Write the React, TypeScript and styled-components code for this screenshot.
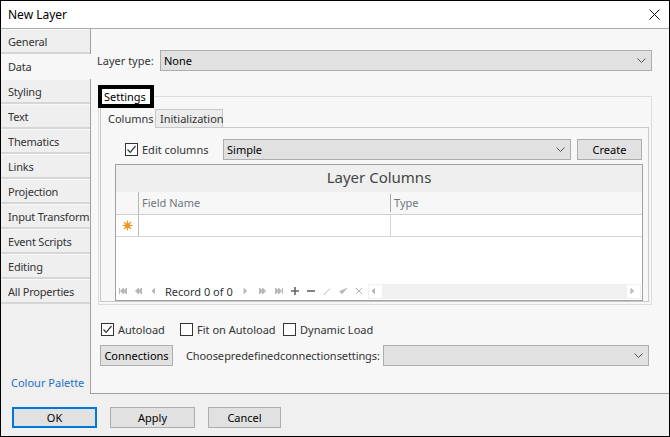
import * as React from 'react'
import styled, { createGlobalStyle } from 'styled-components'

const font = `"Noto Sans", "Segoe UI", "Liberation Sans", sans-serif`

const GlobalStyle = createGlobalStyle`
  html, body { margin: 0; padding: 0; background: #fff; }
  * { box-sizing: border-box; }
`

const navItems = [
  'General',
  'Data',
  'Styling',
  'Text',
  'Thematics',
  'Links',
  'Projection',
  'Input Transform',
  'Event Scripts',
  'Editing',
  'All Properties',
]

const Chevron = () => (
  <svg width="9" height="5" viewBox="0 0 9 5">
    <path d="M0.5 0.5 L4.5 4.5 L8.5 0.5" fill="none" stroke="#555" strokeWidth="1" />
  </svg>
)

const CloseIcon = () => (
  <svg width="11" height="11" viewBox="0 0 11 11">
    <path d="M0.5 0.5 L10.5 10.5 M10.5 0.5 L0.5 10.5" stroke="#111" strokeWidth="1" />
  </svg>
)

const CheckMark = () => (
  <svg width="11" height="11" viewBox="0 0 11 11">
    <path d="M1.5 5.5 L4.2 8.3 L9.5 2" fill="none" stroke="#333" strokeWidth="1.2" />
  </svg>
)

const Star = () => (
  <svg width="11" height="11" viewBox="0 0 11 11">
    <g stroke="#f7941d" strokeWidth="1.1">
      <line x1="5.5" y1="0.5" x2="5.5" y2="10.5" />
      <line x1="0.5" y1="5.5" x2="10.5" y2="5.5" />
      <line x1="2" y1="2" x2="9" y2="9" />
      <line x1="9" y1="2" x2="2" y2="9" />
    </g>
    <circle cx="5.5" cy="5.5" r="2.6" fill="#f7941d" />
  </svg>
)

type NavKind = 'first' | 'prevPage' | 'prev' | 'next' | 'nextPage' | 'last' | 'plus' | 'minus' | 'edit' | 'check' | 'cancel'

const navPaths: Record<NavKind, string> = {
  first: 'M0.5 1 V7 M4.5 1 L1.5 4 L4.5 7Z M7.5 1 L4.5 4 L7.5 7Z',
  prevPage: 'M3.5 1 L0.5 4 L3.5 7Z M6.5 1 L3.5 4 L6.5 7Z',
  prev: 'M3.5 1.5 L1 4 L3.5 6.5Z',
  next: 'M1 1.5 L3.5 4 L1 6.5Z',
  nextPage: 'M0.5 1 L3.5 4 L0.5 7Z M3.5 1 L6.5 4 L3.5 7Z',
  last: 'M0.5 1 L3.5 4 L0.5 7Z M3.5 1 L6.5 4 L3.5 7Z M7.5 1 V7',
  plus: 'M0 4 H8 M4 0 V8',
  minus: 'M0 4 H8',
  edit: 'M1 7.5 L7 1.5 M0.8 7.8 L1.8 7.6',
  check: 'M0.5 4 L3 6.8 L7.8 1',
  cancel: 'M1 1 L7 7 M7 1 L1 7',
}

const NavIcon = ({ kind, dark }: { kind: NavKind; dark?: boolean }) => (
  <svg width="8" height="8" viewBox="0 0 8 8">
    <path
      d={navPaths[kind]}
      fill={dark ? '#666' : '#b7b7b7'}
      stroke={dark ? '#666' : '#b7b7b7'}
      strokeWidth={kind === 'plus' || kind === 'minus' ? 1.6 : 1}
      strokeLinejoin="round"
    />
  </svg>
)

const CheckBox = ({ checked, label, width }: { checked?: boolean; label: string; width?: number }) => (
  <CheckItem width={width}>
    <Box>{checked && <CheckMark />}</Box>
    <span>{label}</span>
  </CheckItem>
)

const Combo = ({ value, grow }: { value?: string; grow?: boolean }) => (
  <ComboBox grow={grow}>
    <span>{value}</span>
    <Chevron />
  </ComboBox>
)

export default function App() {
  return (
    <>
      <GlobalStyle />
      <Window>
        <TitleBar>
          <span>New Layer</span>
          <CloseIcon />
        </TitleBar>
        <Body>
          <Nav>
            {navItems.map((item) => (
              <NavItem key={item} selected={item === 'Data'}>
                {item}
              </NavItem>
            ))}
            <PaletteLink>Colour Palette</PaletteLink>
          </Nav>
          <Content>
            <Row>
              <Label>Layer type:</Label>
              <Combo value="None" grow />
            </Row>
            <Group>
              <Legend>Settings</Legend>
              <TabStrip>
                <Tab selected width={55}>Columns</Tab>
                <Tab width={68}>Initialization</Tab>
                <TabFiller />
              </TabStrip>
              <TabPage>
                <EditRow>
                  <CheckBox checked label="Edit columns" width={92} />
                  <Combo value="Simple" grow />
                  <Button width={65}>Create</Button>
                </EditRow>
                <Grid>
                  <GroupPanel>Layer Columns</GroupPanel>
                  <HeaderRow>
                    <Indicator />
                    <HeaderCell width={251}>Field Name</HeaderCell>
                    <HeaderCell divider>Type</HeaderCell>
                  </HeaderRow>
                  <NewRow>
                    <Indicator>
                      <Star />
                    </Indicator>
                    <Cell width={251} />
                    <Cell divider />
                  </NewRow>
                  <EmptyArea />
                  <Navigator>
                    <NavIcon kind="first" />
                    <NavIcon kind="prevPage" />
                    <NavIcon kind="prev" />
                    <RecordText>Record 0 of 0</RecordText>
                    <NavIcon kind="next" />
                    <NavIcon kind="nextPage" />
                    <NavIcon kind="last" />
                    <NavIcon kind="plus" dark />
                    <NavIcon kind="minus" dark />
                    <NavIcon kind="edit" />
                    <NavIcon kind="check" />
                    <NavIcon kind="cancel" />
                    <ScrollBar>
                      <ScrollButton>
                        <NavIcon kind="prev" />
                      </ScrollButton>
                      <ScrollButton>
                        <NavIcon kind="next" />
                      </ScrollButton>
                    </ScrollBar>
                  </Navigator>
                </Grid>
              </TabPage>
            </Group>
            <OptionsRow>
              <CheckBox checked label="Autoload" width={79} />
              <CheckBox label="Fit on Autoload" width={103} />
              <CheckBox label="Dynamic Load" />
            </OptionsRow>
            <ConnectionsRow>
              <Button width={73}>Connections</Button>
              <ChooseText>Choose predefined connection settings:</ChooseText>
              <Combo grow />
            </ConnectionsRow>
          </Content>
        </Body>
        <Footer>
          <Button width={85} primary>
            OK
          </Button>
          <Button width={85}>Apply</Button>
          <Button width={73}>Cancel</Button>
        </Footer>
      </Window>
    </>
  )
}

const Window = styled.div`
  width: 670px;
  height: 437px;
  border: 1px solid #000;
  display: flex;
  flex-direction: column;
  font-family: ${font};
  font-size: 11px;
  color: #1e1e1e;
  background: #f0f0f0;
  overflow: hidden;
`
const TitleBar = styled.div`
  height: 28px;
  flex: none;
  background: #fff;
  border-bottom: 1px solid #ababab;
  display: flex;
  align-items: center;
  justify-content: space-between;
  padding: 0 9px 1px 7px;
  font-size: 12px;
  color: #000;
`
const Body = styled.div`
  height: 365px;
  flex: none;
  display: flex;
`
const Nav = styled.div`
  width: 90px;
  flex: none;
  display: flex;
  flex-direction: column;
  border-right: 1px solid #a0a0a0;
  background: #f0f0f0;
`
const NavItem = styled.div<{ selected?: boolean }>`
  height: 25px;
  flex: none;
  display: flex;
  align-items: center;
  padding-left: 7px;
  white-space: nowrap;
  letter-spacing: -0.2px;
  color: #333;
  background: ${(p) => (p.selected ? '#f7f7f7' : '#efefef')};
  border-top: 1px solid ${(p) => (p.selected ? '#f7f7f7' : '#f9f9f9')};
  border-bottom: 2px solid ${(p) => (p.selected ? '#f7f7f7' : '#d6d6d6')};
  margin-right: ${(p) => (p.selected ? '-1px' : '0')};
`
const PaletteLink = styled.div`
  margin-top: auto;
  padding: 0 0 4px 10px;
  color: #1f6fc6;
`
const Content = styled.div`
  flex: 1;
  display: flex;
  flex-direction: column;
  background: #f7f7f7;
  border-bottom: 1px solid #a0a0a0;
  padding: 21px 17px 0 6px;
`
const Row = styled.div`
  display: flex;
  align-items: center;
  gap: 4px;
`
const Label = styled.span`
  width: 59px;
  flex: none;
  color: #333;
`
const ComboBox = styled.div<{ grow?: boolean }>`
  height: 21px;
  flex: ${(p) => (p.grow ? 1 : 'none')};
  display: flex;
  align-items: center;
  justify-content: space-between;
  padding: 0 5px 0 3px;
  background: #e1e1e1;
  border: 1px solid #adadad;
  color: #000;
`
const Group = styled.fieldset`
  margin: 14px 0 0 1px;
  border: 1px solid #dcdcdc;
  padding: 0 2px 2px 1px;
  min-width: 0;
`
const Legend = styled.legend`
  margin-left: -2px;
  padding: 0 4px 0 2px;
  border: 4px solid #000;
  background: #fff;
  line-height: 15px;
  color: #000;
`
const TabStrip = styled.div`
  display: flex;
  align-items: flex-end;
  height: 20px;
`
const Tab = styled.div<{ selected?: boolean; width: number }>`
  width: ${(p) => p.width}px;
  height: ${(p) => (p.selected ? 20 : 19)}px;
  display: flex;
  align-items: center;
  padding-left: ${(p) => (p.selected ? 7 : 4)}px;
  color: #333;
  background: ${(p) => (p.selected ? '#f7f7f7' : '#ececec')};
  border-left: 1px solid #c8c8c8;
  border-top: ${(p) => (p.selected ? 'none' : '1px solid #c8c8c8')};
  border-right: ${(p) => (p.selected ? 'none' : '1px solid #c8c8c8')};
  border-bottom: ${(p) => (p.selected ? 'none' : '1px solid #c8c8c8')};
`
const TabFiller = styled.div`
  flex: 1;
  border-bottom: 1px solid #c8c8c8;
`
const TabPage = styled.div`
  display: flex;
  flex-direction: column;
  border: 1px solid #c8c8c8;
  border-top: none;
  padding: 11px 5px 0 14px;
`
const EditRow = styled.div`
  display: flex;
  align-items: center;
  padding: 0 1px 0 10px;
  gap: 6px;
`
const CheckItem = styled.label<{ width?: number }>`
  display: flex;
  align-items: center;
  gap: 4px;
  flex: none;
  width: ${(p) => (p.width ? `${p.width}px` : 'auto')};
  color: #333;
  white-space: nowrap;
`
const Box = styled.span`
  width: 13px;
  height: 13px;
  flex: none;
  display: flex;
  align-items: center;
  justify-content: center;
  border: 1px solid #333;
  background: #fff;
`
const Button = styled.div<{ width: number; primary?: boolean }>`
  width: ${(p) => p.width}px;
  height: 21px;
  flex: none;
  display: flex;
  align-items: center;
  justify-content: center;
  background: #e1e1e1;
  border: ${(p) => (p.primary ? '2px solid #0078d7' : '1px solid #adadad')};
  color: #000;
`
const Grid = styled.div`
  height: 137px;
  margin-top: 4px;
  display: flex;
  flex-direction: column;
  border: 1px solid #a0a0a0;
  background: #fff;
`
const GroupPanel = styled.div`
  height: 27px;
  flex: none;
  display: flex;
  align-items: center;
  justify-content: center;
  padding-bottom: 3px;
  background: #efefef;
  font-size: 15px;
  color: #444;
`
const HeaderRow = styled.div`
  height: 23px;
  flex: none;
  display: flex;
  background: #f7f7f7;
  border-bottom: 1px solid #cfcfcf;
`
const Indicator = styled.div`
  width: 23px;
  flex: none;
  display: flex;
  align-items: center;
  justify-content: center;
  border-right: 1px solid #b8b8b8;
`
const HeaderCell = styled.div<{ width?: number; divider?: boolean }>`
  width: ${(p) => (p.width ? `${p.width}px` : 'auto')};
  flex: ${(p) => (p.width ? 'none' : 1)};
  display: flex;
  align-items: center;
  padding: 0 0 2px 3px;
  margin: 2px 0;
  color: #707680;
  border-left: ${(p) => (p.divider ? '1px solid #a8a8a8' : 'none')};
`
const NewRow = styled.div`
  height: 22px;
  flex: none;
  display: flex;
  border-bottom: 1px solid #d4d4d4;
`
const Cell = styled.div<{ width?: number; divider?: boolean }>`
  width: ${(p) => (p.width ? `${p.width}px` : 'auto')};
  flex: ${(p) => (p.width ? 'none' : 1)};
  border-left: ${(p) => (p.divider ? '1px solid #d4d4d4' : 'none')};
`
const EmptyArea = styled.div`
  flex: 1;
`
const Navigator = styled.div`
  height: 17px;
  flex: none;
  display: flex;
  align-items: center;
  gap: 8px;
  padding: 0 1px 1px 3px;
`
const RecordText = styled.span`
  margin: 0 2px 0 -2px;
  color: #333;
`
const ScrollBar = styled.div`
  flex: 1;
  height: 15px;
  margin-left: -3px;
  display: flex;
  justify-content: space-between;
  padding: 1px;
  background: #f0f0f0;
`
const ScrollButton = styled.div`
  width: 13px;
  display: flex;
  align-items: center;
  justify-content: center;
  background: #fff;
`
const OptionsRow = styled.div`
  display: flex;
  align-items: center;
  height: 14px;
  margin: 17px 0 0 4px;
`
const ConnectionsRow = styled.div`
  display: flex;
  align-items: center;
  margin: 9px 3px 0 3px;
`
const ChooseText = styled.span`
  width: 197px;
  flex: none;
  margin-left: 13px;
  white-space: nowrap;
  overflow: hidden;
  word-spacing: -2.5px;
  letter-spacing: -0.1px;
  color: #333;
`
const Footer = styled.div`
  flex: 1;
  display: flex;
  gap: 13px;
  padding: 13px 0 0 11px;
  background: #f0f0f0;
`
